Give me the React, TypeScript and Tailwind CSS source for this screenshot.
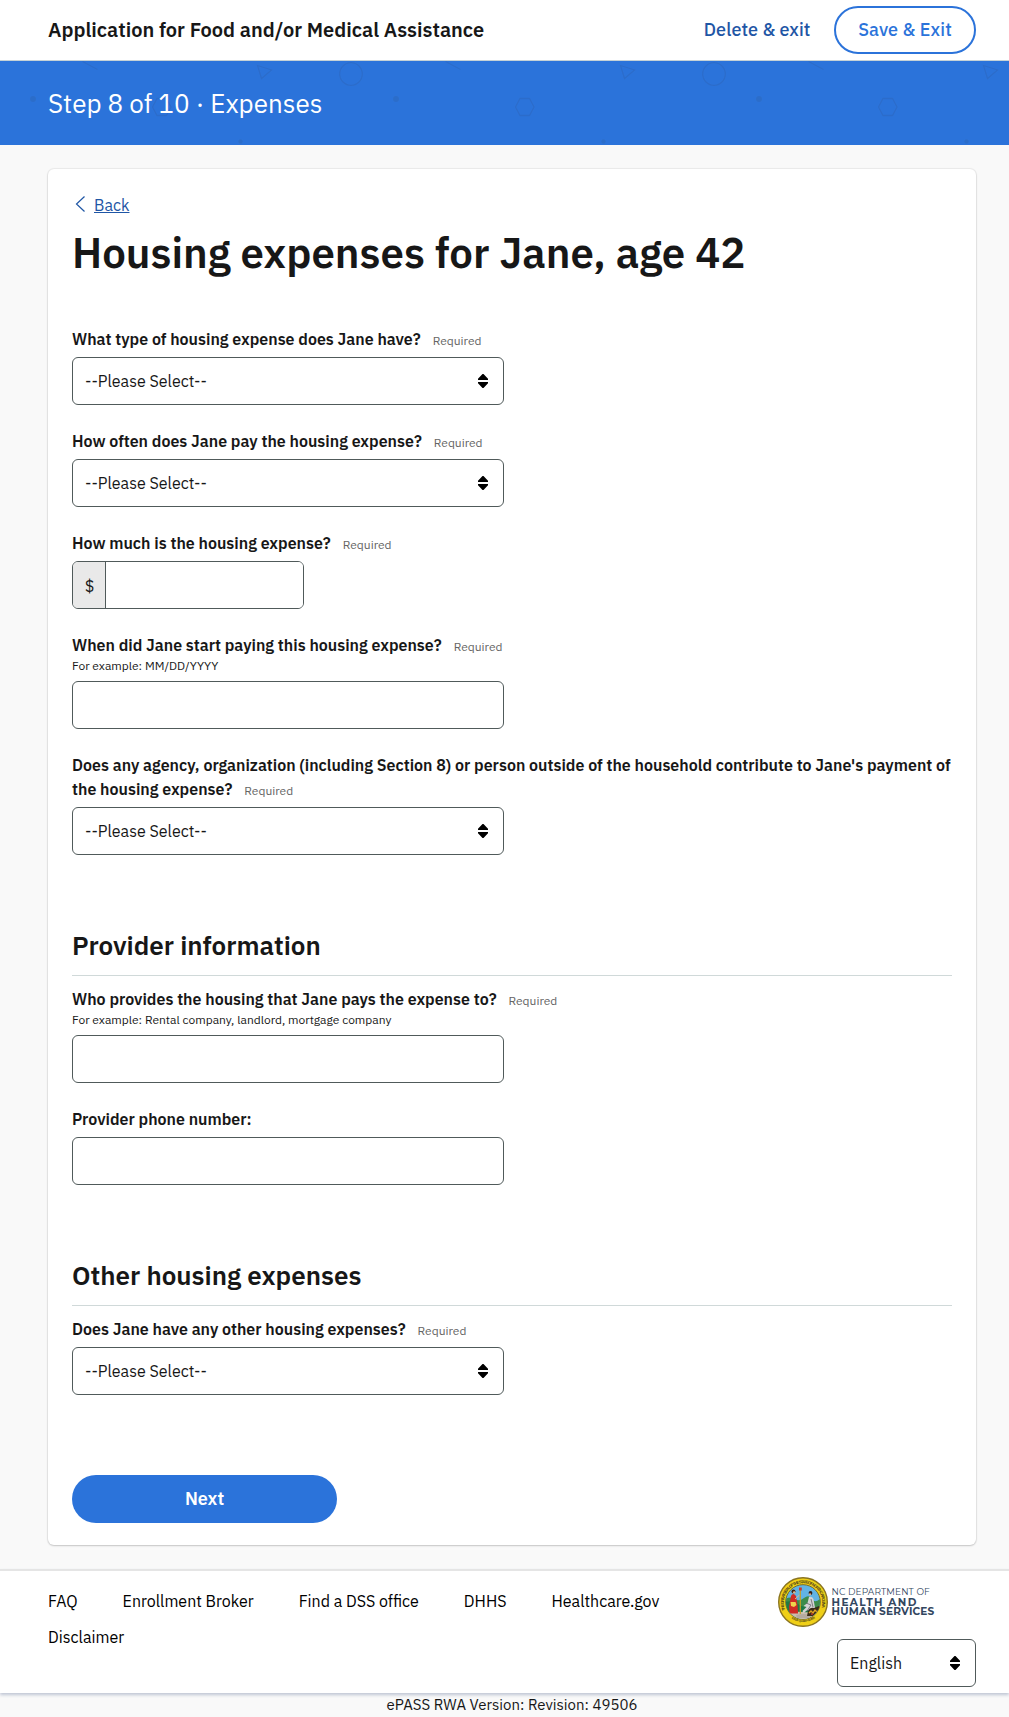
import type { ReactNode } from "react";

function SortIcon() {
  return (
    <svg width="10" height="14" viewBox="0 0 10 14" aria-hidden="true">
      <path
        d="M4.500 0h1L10 4.800V6H0V4.800Z M0 8h10v1.200L5.500 14h-1L0 9.200Z"
        fill="#000"
      />
    </svg>
  );
}

function SelectBox({ value, className }: { value: string; className: string }) {
  return (
    <button
      type="button"
      className={`flex h-12 items-center justify-between rounded-[6px] border border-[#505a5a] bg-white pl-3 pr-[15px] text-left ${className}`}
    >
      <span>{value}</span>
      <SortIcon />
    </button>
  );
}

function TextBox({ label }: { label: string }) {
  return (
    <input
      type="text"
      aria-label={label}
      className="block h-12 w-[432px] rounded-[6px] border border-[#505a5a] bg-white px-3"
    />
  );
}

function Field({
  label,
  required = true,
  hint,
  children,
}: {
  label: string;
  required?: boolean;
  hint?: string;
  children: ReactNode;
}) {
  return (
    <div>
      <div className="font-semibold">
        {label}
        {required && (
          <span className="ml-3 text-xs font-normal leading-none text-[#656565]">Required</span>
        )}
      </div>
      {hint && <div className="text-xs leading-[18px]">{hint}</div>}
      <div className="mt-1.5">{children}</div>
    </div>
  );
}

function SectionHeading({ children }: { children: ReactNode }) {
  return (
    <h2 className="mt-[72px] mb-[11px] h-[49px] border-b border-[#d0d9d9] text-[26px] font-semibold leading-[37px]">
      {children}
    </h2>
  );
}

function BannerPattern() {
  return (
    <svg className="absolute inset-0 h-full w-full" aria-hidden="true">
      <defs>
        <pattern id="shapes" width="363" height="84" patternUnits="userSpaceOnUse">
          <g fill="none" stroke="#2b6ccb" strokeWidth="1.3">
            <path d="M82.5 0.5 97.5 8.5" />
            <path d="M257.5 4.5 271.5 9 261.5 17.5Z" />
            <circle cx="351" cy="13" r="11.3" />
            <path d="M157 37.5h9.5l4.500 8.500-4.500 8.500H157L152.500 46Z" />
          </g>
          <g fill="#2b6dca">
            <circle cx="33" cy="38" r="3" />
            <circle cx="240.500" cy="80.500" r="2.200" />
          </g>
        </pattern>
      </defs>
      <rect width="100%" height="100%" fill="url(#shapes)" />
    </svg>
  );
}

function StateSeal() {
  return (
    <svg width="50" height="50" viewBox="0 0 50 50" aria-hidden="true">
      <defs>
        <path id="ring-top" d="M7.200 33A19.300 19.300 0 1 1 42.800 33" />
        <path id="ring-bottom" d="M9 37.500A20.800 20.800 0 0 0 41 37.500" />
        <clipPath id="seal-scene">
          <circle cx="25" cy="25" r="17" />
        </clipPath>
      </defs>
      <circle cx="25" cy="25" r="24.300" fill="#efcf17" stroke="#8a7420" strokeWidth="1.400" />
      <circle cx="25" cy="25" r="17.300" fill="#62b3e4" stroke="#6e6220" strokeWidth="0.900" />
      <g clipPath="url(#seal-scene)">
        <path d="M7 22q6-3 10 0t9-1 8 1 9-1v12H7Z" fill="#3d8c4b" />
        <path d="M7 25q8-2 13 2t10 2v7H7Z" fill="#1f7a45" />
        <path d="M7 36q9-2 18-1t18-2v12H7Z" fill="#cbbfae" />
        <path d="M18 38q7-2 16 0l-2 3H19Z" fill="#b5aba0" />
        <path d="M13 19q2-4 5 0l1.500 9 .5 8.500h-8.500l-.5-7Z" fill="#cf2a24" />
        <path d="M12.500 25h5l1 3-2.500 2-3-1Z" fill="#f0d34a" />
        <circle cx="15.500" cy="14.500" r="2" fill="#3f2417" />
        <circle cx="16.200" cy="15.400" r="1.200" fill="#e3b48c" />
        <path d="m17 22 4.500-4" stroke="#e3b48c" strokeWidth="1" />
        <path d="M22.300 13v24" stroke="#c9a01f" strokeWidth="1.200" />
        <path d="M21 10.500h2.800v3H21Z" fill="#c5392e" />
        <path d="M31 20q3-1 4.500 2l1 6 1 5h-8l-4 3-1-2 4-4-3-1 4-3Z" fill="#d5d3d4" />
        <path d="m28 26 5 2-4 6M33 22l2 8" fill="none" stroke="#63646b" strokeWidth="0.800" />
        <circle cx="32.500" cy="16" r="1.900" fill="#35201a" />
        <circle cx="32" cy="17.300" r="1.100" fill="#e3b48c" />
        <path d="M30 34q2-4 6-3l5-2v7l-6 3h-6Z" fill="#3a2b18" />
        <path d="m31 36 2-2 2 2 2-3 2 2" fill="none" stroke="#e0a321" strokeWidth="1.400" />
        <circle cx="34" cy="37" r="1" fill="#c0392b" />
      </g>
      <g fill="#4e431a" fontFamily="'Liberation Sans', sans-serif" fontWeight="700">
        <text fontSize="4.200">
          <textPath href="#ring-top" textLength="73">
            THE GREAT SEAL OF THE STATE OF NORTH CAROLINA
          </textPath>
        </text>
        <text fontSize="3">
          <textPath href="#ring-bottom" startOffset="6" textLength="25">
            ESSE QUAM VIDERI
          </textPath>
        </text>
      </g>
    </svg>
  );
}

function DepartmentLogo() {
  return (
    <div className="flex h-[50px] text-[#33475f]">
      <StateSeal />
      <div className="ml-[3.500px] pt-[9px] font-['Montserrat','Inter',sans-serif] whitespace-nowrap">
        <div className="h-[11px] text-[9px] leading-[11px] tracking-[0.130px]">NC DEPARTMENT OF</div>
        <div className="h-[10px] text-[10.500px] font-bold leading-[11px] tracking-[1.400px]">HEALTH AND</div>
        <div className="h-[10px] text-[10.500px] font-bold leading-[10px] tracking-[0.200px]">HUMAN SERVICES</div>
      </div>
    </div>
  );
}

const footerLinks = [
  "FAQ",
  "Enrollment Broker",
  "Find a DSS office",
  "DHHS",
  "Healthcare.gov",
  "Disclaimer",
];

const placeholder = "--Please Select--";

export default function App() {
  return (
    <div className="min-h-[1717px] bg-[#f9f9f9] font-['IBM_Plex_Sans','Roboto',sans-serif] text-base leading-6 text-[#171717]">
      <header className="flex h-[61px] items-center border-b border-[#c6d2d6] bg-white pl-12 pr-[33px]">
        <div className="flex-1 text-xl font-semibold">
          Application for Food and/or Medical Assistance
        </div>
        <a className="mr-[23.500px] text-lg font-medium tracking-[0.080px] text-[#1f56a5]">
          Delete &amp; exit
        </a>
        <button
          type="button"
          className="h-12 w-[142px] rounded-full border-2 border-[#2b73da] text-lg font-medium tracking-[0.120px] text-[#2b73da]"
        >
          Save &amp; Exit
        </button>
      </header>

      <div className="relative flex h-[84px] items-center bg-[#2b73da] pl-12 text-[26px] text-white">
        <BannerPattern />
        <span className="relative">Step 8 of 10 · Expenses</span>
      </div>

      <main className="mt-6 mr-[33px] ml-12 h-[1376px] rounded-md bg-white px-6 pt-6 shadow-[0_0_1px_1px_rgba(0,0,0,0.06),0_1px_2px_rgba(0,0,0,0.16)]">
        <a className="flex items-center text-[#1f56a5]">
          <svg width="22" height="24" viewBox="0 0 22 24" fill="none" aria-hidden="true">
            <path d="M12.500 3.500 4.500 11l8 7.500" stroke="#1f56a5" strokeWidth="1.200" />
          </svg>
          <span className="underline">Back</span>
        </a>
        <h1 className="mt-2 text-[42px] font-semibold leading-[56px]">
          Housing expenses for Jane, age 42
        </h1>

        <form className="mt-[46px]">
          <div className="flex flex-col gap-6">
            <Field label="What type of housing expense does Jane have?">
              <SelectBox value={placeholder} className="w-[432px]" />
            </Field>
            <Field label="How often does Jane pay the housing expense?">
              <SelectBox value={placeholder} className="w-[432px]" />
            </Field>
            <Field label="How much is the housing expense?">
              <div className="flex h-12 w-[232px] overflow-hidden rounded-[6px] border border-[#505a5a]">
                <span className="flex w-[33px] items-center justify-center border-r border-[#505a5a] bg-[#e9e9e9] pt-0.5 pl-px">
                  $
                </span>
                <input type="text" aria-label="Amount" className="min-w-0 flex-1 bg-white px-3" />
              </div>
            </Field>
            <Field
              label="When did Jane start paying this housing expense?"
              hint="For example: MM/DD/YYYY"
            >
              <TextBox label="Start date" />
            </Field>
            <Field label="Does any agency, organization (including Section 8) or person outside of the household contribute to Jane's payment of the housing expense?">
              <SelectBox value={placeholder} className="w-[432px]" />
            </Field>
          </div>

          <SectionHeading>Provider information</SectionHeading>
          <div className="flex flex-col gap-6">
            <Field
              label="Who provides the housing that Jane pays the expense to?"
              hint="For example: Rental company, landlord, mortgage company"
            >
              <TextBox label="Provider" />
            </Field>
            <Field label="Provider phone number:" required={false}>
              <TextBox label="Provider phone number" />
            </Field>
          </div>

          <SectionHeading>Other housing expenses</SectionHeading>
          <Field label="Does Jane have any other housing expenses?">
            <SelectBox value={placeholder} className="w-[432px]" />
          </Field>

          <button
            type="button"
            className="mt-20 block h-12 w-[265px] rounded-full bg-[#2b73da] text-lg font-semibold text-white"
          >
            Next
          </button>
        </form>
      </main>

      <footer className="mt-6 flex h-[124px] justify-between border-t-2 border-[#e5e5e5] bg-white pl-12 pr-[33px] shadow-[0_2px_3px_rgba(60,80,130,0.3)]">
        <nav className="flex w-[660px] flex-wrap content-start gap-x-[45px] gap-y-3 pt-[18px] text-black">
          {footerLinks.map((link) => (
            <a key={link}>{link}</a>
          ))}
        </nav>
        <div className="flex w-[198px] flex-col pt-1.5">
          <DepartmentLogo />
          <SelectBox value="English" className="mt-3 w-[139px] self-end" />
        </div>
      </footer>
      <p className="pt-0.5 pl-[15px] text-center text-[15px] leading-5">
        ePASS RWA Version: Revision: 49506
      </p>
    </div>
  );
}
